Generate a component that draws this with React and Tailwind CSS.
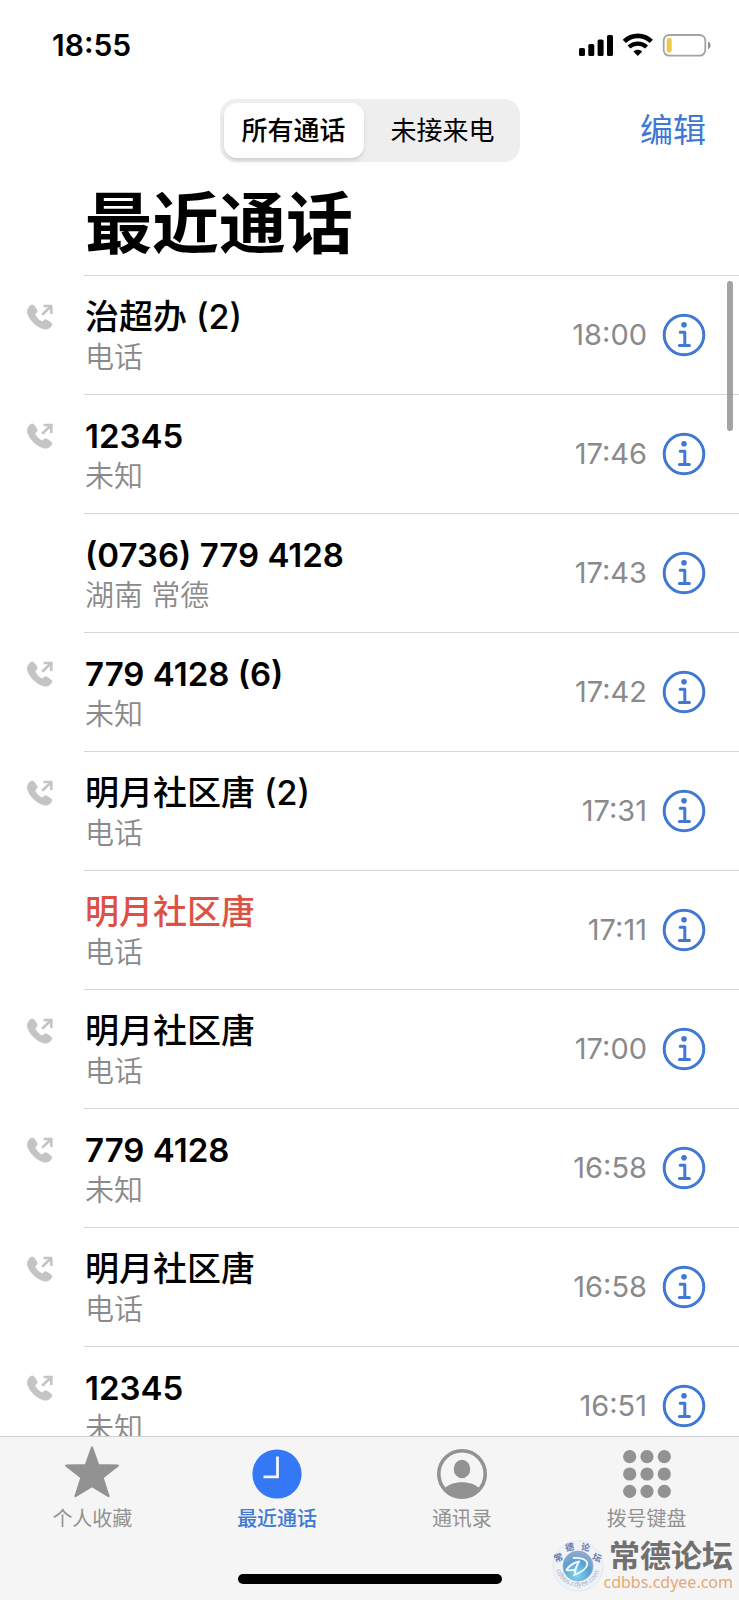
/**
 * Recent Calls Page - phone call history
 *
 * Status bar, all/missed switch, call list and bottom tab bar
 */
import React, { useState } from "react";

const calls = [
  { name: "治超办 (2)", label: "电话", time: "18:00", outgoing: true },
  { name: "12345", label: "未知", time: "17:46", outgoing: true },
  { name: "(0736) 779 4128", label: "湖南 常德", time: "17:43" },
  { name: "779 4128 (6)", label: "未知", time: "17:42", outgoing: true },
  { name: "明月社区唐 (2)", label: "电话", time: "17:31", outgoing: true },
  { name: "明月社区唐", label: "电话", time: "17:11", missed: true },
  { name: "明月社区唐", label: "电话", time: "17:00", outgoing: true },
  { name: "779 4128", label: "未知", time: "16:58", outgoing: true },
  { name: "明月社区唐", label: "电话", time: "16:58", outgoing: true },
  { name: "12345", label: "未知", time: "16:51", outgoing: true },
];

function OutgoingIcon() {
  return (
    <svg viewBox="0 0 26 26" className="size-[26px]" aria-hidden="true">
      <path
        fill="#c4c4c6"
        stroke="#c4c4c6"
        strokeWidth="0.8"
        d="M3.2 1.8C4.5.6 6.3.7 7.3 2.1l2.3 3.4c.9 1.4.6 2.5-.4 3.6l-.9.9c-.3.4-.3.8-.1 1.2 1.3 2.4 3.8 5 6.4 6.4.4.3.9.2 1.2-.1l.9-.9c1.1-1 2.2-1.2 3.6-.3l3.4 2.3c1.5 1 1.5 2.7.3 3.9-2 2.4-5 3.3-8.5 2.1C8.5 22 3.2 16.5.9 10.3-.2 6.8 1 3.8 3.2 1.8Z"
      />
      <path d="M15.2 10.8l8.8-8.6M16.6 2h7.700v8" fill="none" stroke="#c4c4c6" strokeWidth="2.6" />
    </svg>
  );
}

function InfoIcon() {
  return (
    <svg viewBox="0 0 44 44" className="size-11" fill="none" stroke="#4078d4" aria-hidden="true">
      <circle cx="22" cy="22" r="19.8" strokeWidth="3" />
      <circle cx="22" cy="11.8" r="2.8" fill="#4078d4" stroke="none" />
      <path d="M18.2 19.2h4.6v13.2M17.4 32.6h10" strokeWidth="3" strokeLinecap="round" strokeLinejoin="round" />
    </svg>
  );
}

function StatusIcons() {
  return (
    <svg viewBox="0 0 134 24" className="h-6 w-[134px]" aria-hidden="true">
      <rect x="1" y="15" width="6" height="8" rx="1.6" />
      <rect x="10.3" y="11" width="6" height="12" rx="1.6" />
      <rect x="19.6" y="6.5" width="6" height="16.5" rx="1.6" />
      <rect x="29" y="2" width="6" height="21" rx="1.6" />
      <path d="M46.3 8.3c7.5-7.2 19.500-7.200 27 0" fill="none" stroke="#000" strokeWidth="4.6" />
      <path d="M51 14c5-4.6 12.600-4.600 17.600 0" fill="none" stroke="#000" strokeWidth="4.2" />
      <path d="M55.4 18.600c2.600-2.400 6.200-2.400 8.800 0L59.800 23Z" />
      <rect x="85.7" y="2" width="41.6" height="20.6" rx="5.5" fill="none" stroke="#a3a3a3" strokeWidth="1.8" />
      <rect x="88.7" y="5" width="5" height="14.5" rx="2" fill="#ecc94b" />
      <path d="M130 8.6c3.4 1.4 3.4 6.2 0 7.6Z" fill="#8f8f8f" />
    </svg>
  );
}

function StarIcon() {
  return (
    <svg viewBox="0 0 54 58" className="h-[58px] w-[54px]" aria-hidden="true">
      <path
        d="M27 2.5l6.2 17.600 19.600.6-15.300 12L43.500 51 27 41 10.500 51l6-18.300-15.300-12 19.600-.6Z"
        fill="#929292"
        stroke="#929292"
        strokeWidth="2.2"
        strokeLinejoin="round"
      />
    </svg>
  );
}

function ClockIcon() {
  return (
    <svg viewBox="0 0 50 50" className="size-[50px]" aria-hidden="true">
      <circle cx="25" cy="25" r="24.6" fill="#3478f6" />
      <path d="M25.5 7.5v20.300H11.500" fill="none" stroke="#f4f4f5" strokeWidth="2.8" />
    </svg>
  );
}

function ContactIcon() {
  return (
    <svg viewBox="0 0 50 50" className="size-[50px]" aria-hidden="true">
      <circle cx="25" cy="25" r="23.2" fill="none" stroke="#929292" strokeWidth="3.6" />
      <ellipse cx="25" cy="20" rx="8.3" ry="9.2" fill="#929292" />
      <path d="M7.5 39.5c4-4 10-6.200 17.500-6.200s13.500 2.200 17.500 6.200C38 45 32 48.200 25 48.200S12 45 7.500 39.500Z" fill="#929292" />
    </svg>
  );
}

function KeypadIcon() {
  return (
    <svg viewBox="0 0 50 50" className="size-[50px]" fill="#929292" aria-hidden="true">
      {[7.7, 25, 42.3].map((cy) =>
        [7.7, 25, 42.3].map((cx) => <circle key={`${cx}-${cy}`} cx={cx} cy={cy} r="6.6" />)
      )}
    </svg>
  );
}

function ForumLogo() {
  return (
    <svg viewBox="0 0 52 52" className="size-[52px]" aria-hidden="true">
      <defs>
        <radialGradient id="globe" cx="45%" cy="80%" r="75%">
          <stop offset="0" stopColor="#7fd9f0" />
          <stop offset="0.6" stopColor="#5b9fd0" />
          <stop offset="1" stopColor="#8ea9d0" />
        </radialGradient>
        <path id="ringBottom" d="M3.500 24a22.500 22.500 0 1 0 45 0" />
      </defs>
      <circle cx="26" cy="26" r="25" fill="#eff2f6" stroke="#e3e7ec" />
      <circle cx="26" cy="26" r="15" fill="url(#globe)" stroke="#8fa8cc" strokeWidth="0.8" />
      <path
        d="M14 30c4-5 9-8 14-8.500M21 18c10-1 15.500 2.500 14 7.500-1.600 4.500-6.500 7-12.500 9.500.5-5.500 2-9.500 4.500-13.500M14 30c3.500.8 7 .5 10.500-1"
        fill="none"
        stroke="#f3fbff"
        strokeWidth="1.8"
      />
      <g fontFamily="'Noto Sans CJK SC', sans-serif" fontSize="9" fontWeight="700" fill="#6079b4" textAnchor="middle">
        <text x="6.5" y="21" transform="rotate(-20 6.5 18)">常</text>
        <text x="17.5" y="10.5" transform="rotate(-10 17.5 7)">德</text>
        <text x="33.5" y="10.5" transform="rotate(10 33.5 7)">论</text>
        <text x="45" y="21" transform="rotate(20 45 18)">坛</text>
      </g>
      <text fontFamily="'Noto Sans', sans-serif" fontSize="7" fill="#a9b4cb">
        <textPath href="#ringBottom" startOffset="6">
          cdbbs.cdyee.com
        </textPath>
      </text>
    </svg>
  );
}

function CallRow({ call }) {
  const isNumber = /^[\d() ]+$/.test(call.name);

  return (
    <li className="flex">
      <div className="w-[84px] shrink-0 pt-[29px] pl-[27px]">{call.outgoing && <OutgoingIcon />}</div>
      <div className="flex h-[119px] flex-1 items-start border-t border-[#d6d6d8] pr-[33px]">
        <div className="flex-1 pt-5 pl-px">
          <h2
            className={`leading-[42px] ${isNumber ? "text-[33px] font-semibold" : "text-[34px] font-medium"} ${
              call.missed ? "text-[#dd5145]" : "text-black"
            }`}
          >
            {call.name}
          </h2>
          <p className="text-[29px] leading-10 font-[350] text-[#8a8a8c]">{call.label}</p>
        </div>
        <div className="flex items-center gap-[15px] pt-[37px]">
          <time className="text-[29px] leading-[44px] text-[#8a8a8c]">{call.time}</time>
          <button type="button" aria-label="详细信息">
            <InfoIcon />
          </button>
        </div>
      </div>
    </li>
  );
}

const tabs = [
  { label: "个人收藏", icon: <StarIcon /> },
  { label: "最近通话", icon: <ClockIcon />, active: true },
  { label: "通讯录", icon: <ContactIcon /> },
  { label: "拨号键盘", icon: <KeypadIcon /> },
];

function App() {
  const [filter, setFilter] = useState("all");

  return (
    <div className="relative flex h-screen flex-col overflow-hidden bg-white font-['Inter','Noto_Sans_CJK_SC',sans-serif] text-black">
      <div className="flex h-[90px] shrink-0 items-center justify-between pr-[27px] pl-[52px]">
        <span className="text-[30px] font-semibold">18:55</span>
        <StatusIcons />
      </div>

      <header className="shrink-0">
        <div className="grid grid-cols-[1fr_300px_1fr] items-center pt-[9px]">
          <div />
          <div className="grid h-[63px] grid-cols-2 rounded-2xl bg-[#eeeeef] p-1">
            <button
              type="button"
              onClick={() => setFilter("all")}
              className={`rounded-[13px] text-[26px] ${filter === "all" ? "mr-1.5 bg-white font-medium shadow-md" : ""}`}
            >
              所有通话
            </button>
            <button
              type="button"
              onClick={() => setFilter("missed")}
              className={`rounded-[13px] text-[26px] ${filter === "missed" ? "bg-white font-medium shadow-md" : ""}`}
            >
              未接来电
            </button>
          </div>
          <button type="button" className="justify-self-end pr-[33px] text-[33px] text-[#4078d4]">
            编辑
          </button>
        </div>
        <h1 className="pt-3 pb-px pl-[85px] text-[67px] leading-[100px] font-bold">最近通话</h1>
      </header>

      <div className="relative min-h-0 flex-1">
        <ul className="h-full overflow-y-auto [scrollbar-width:none]">
          {calls.map((call, index) => (
            <CallRow call={call} key={index} />
          ))}
        </ul>
        <div className="absolute top-[6px] right-[6px] h-[150px] w-[6px] rounded-full bg-[#8c8c8c]/80" />
      </div>

      <nav className="h-[164px] shrink-0 border-t border-[#cfcfd1] bg-[#f5f5f6]">
        <div className="grid grid-cols-4 pt-2">
          {tabs.map((tab) => (
            <button
              type="button"
              key={tab.label}
              className={`flex flex-col items-center text-[20px] leading-7 ${
                tab.active ? "font-medium text-[#4078d4]" : "text-[#929292]"
              }`}
            >
              <span className="mb-0.5 flex h-[58px] items-center">{tab.icon}</span>
              {tab.label}
            </button>
          ))}
        </div>
        <div className="mx-auto mt-[41px] h-[10px] w-[264px] rounded-full bg-black" />
      </nav>

      {/* forum watermark */}
      <div className="absolute right-[6px] bottom-2 flex items-center">
        <ForumLogo />
        <div className="flex flex-col items-end">
          <span className="text-[31px] leading-8 font-bold text-[#707070]">常德论坛</span>
          <span className="font-['Noto_Sans',sans-serif] text-base leading-5 text-[#e6a878]">cdbbs.cdyee.com</span>
        </div>
      </div>
    </div>
  );
}

export default App;
